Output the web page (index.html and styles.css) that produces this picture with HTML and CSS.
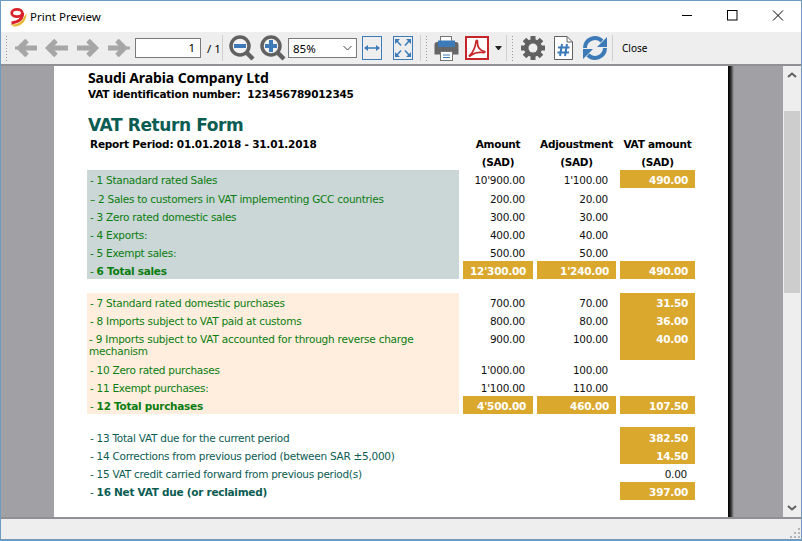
FILE: index.html
```html
<!DOCTYPE html>
<html lang="en">
<head>
	<meta charset="UTF-8">
	<title>Print Preview</title>
	<link rel="stylesheet" href="styles.css">
</head>
<body>

<div class="window">

	<div class="titlebar">
		<svg class="logo" width="18" height="20" viewBox="0 0 18 20">
			<path d="M1.500 17C8 18.500 13 15 15.500 9L17.500 6.500C18 13 12 20.500 4.500 19.500Z" fill="#e8b93a"/>
			<ellipse cx="8" cy="6" rx="5.300" ry="3.600" fill="none" stroke="#d9232a" stroke-width="2.800"/>
			<path d="M13.800 6C13.800 11 10 15 2.500 16" fill="none" stroke="#d9232a" stroke-width="2.800"/>
		</svg>
		<span class="title">Print Preview</span>
		<div class="caption-btns">
			<svg width="12" height="12" viewBox="0 0 12 12"><path d="M0 5.500H10" stroke="#000"/></svg>
			<svg width="12" height="12" viewBox="0 0 12 12"><rect x="0.500" y="0.500" width="9.500" height="9.500" fill="none" stroke="#000"/></svg>
			<svg width="12" height="12" viewBox="0 0 12 12"><path d="M1 0.500L11 10.500M11 0.500L1 10.500" stroke="#000"/></svg>
		</div>
	</div>

	<div class="toolbar">
		<span class="grip"></span>
		<svg class="ico first" width="24" height="20" viewBox="0 0 24 20"><path d="M1 10H4" stroke="#a6a6a6" stroke-width="3"/><path d="M13 2.500L5.500 10L13 17.500M6 10H23" fill="none" stroke="#a6a6a6" stroke-width="5"/></svg>
		<svg class="ico prev" width="24" height="20" viewBox="0 0 24 20"><path d="M12 2.500L4.500 10L12 17.500M5 10H24" fill="none" stroke="#a6a6a6" stroke-width="5"/></svg>
		<svg class="ico next" width="24" height="20" viewBox="0 0 24 20"><path d="M12 2.500L19.500 10L12 17.500M1 10H19" fill="none" stroke="#a6a6a6" stroke-width="5"/></svg>
		<svg class="ico last" width="24" height="20" viewBox="0 0 24 20"><path d="M10 2.500L17.500 10L10 17.500M1 10H17" fill="none" stroke="#a6a6a6" stroke-width="5"/><path d="M19 10H23" stroke="#a6a6a6" stroke-width="3"/></svg>
		<div class="page-input">1</div>
		<span class="page-count">/ 1</span>
		<span class="sep"></span>
		<svg class="ico zoom-out" width="26" height="26" viewBox="0 0 26 26">
			<path d="M17 17L24 24" stroke="#616161" stroke-width="4.500"/>
			<circle cx="11" cy="11" r="9" fill="#f2f2f2" stroke="#616161" stroke-width="3.500"/>
			<path d="M5 11H17" stroke="#3d7ab8" stroke-width="4"/>
		</svg>
		<svg class="ico zoom-in" width="26" height="26" viewBox="0 0 26 26">
			<path d="M17 17L24 24" stroke="#616161" stroke-width="4.500"/>
			<circle cx="11" cy="11" r="9" fill="#f2f2f2" stroke="#616161" stroke-width="3.500"/>
			<path d="M5 11H17M11 5V17" stroke="#3d7ab8" stroke-width="4"/>
		</svg>
		<div class="zoom-select">
			<span>85%</span>
			<svg width="9" height="6" viewBox="0 0 9 6"><path d="M0.500 1L4.500 5L8.500 1" fill="none" stroke="#444"/></svg>
		</div>
		<div class="fit-box fit-width">
			<svg width="16" height="8" viewBox="0 0 16 8"><path d="M2 4H14" stroke="#3d7ab8" stroke-width="1.500"/><path d="M0 4L4 1V7ZM16 4L12 1V7Z" fill="#3d7ab8"/></svg>
		</div>
		<div class="fit-box fit-page">
			<svg width="18" height="20" viewBox="0 0 18 20"><path d="M1 1H6L1 6ZM17 1H12L17 6ZM1 19H6L1 14ZM17 19H12L17 14Z" fill="#3d7ab8"/><path d="M3 3L7 7.500M15 3L11 7.500M3 17L7 12.500M15 17L11 12.500" stroke="#3d7ab8" stroke-width="1.500"/></svg>
		</div>
		<span class="sep group-sep"></span>
		<span class="grip"></span>
		<svg class="ico printer" width="25" height="25" viewBox="0 0 25 25">
			<rect x="6.500" y="0.500" width="11" height="6" fill="#fff" stroke="#757575"/>
			<path d="M3 6H22Q24.500 6 24.500 9V18.500H0.500V9Q0.500 6 3 6Z" fill="#666"/>
			<rect x="4" y="4.500" width="17" height="6.500" fill="#3d7ab8"/>
			<rect x="6.500" y="15.500" width="12" height="9" fill="#fff" stroke="#757575"/>
			<path d="M9 19H16M9 21.500H16" stroke="#3d7ab8"/>
		</svg>
		<svg class="ico pdf" width="24" height="24" viewBox="0 0 24 24">
			<rect x="1" y="1" width="22" height="22" fill="#fff" stroke="#c4262a" stroke-width="2"/>
			<path d="M4.500 19.500C7.500 17.500 10.500 11 11 5.500C11.200 3.500 12.800 4 12.500 6.500C12 10.500 15 15 19.500 15.500C20.500 16 19.500 17 17.500 16.500C13.500 16 9 17 6.500 19C5 20.500 4 20.500 4.500 19.500Z" fill="none" stroke="#c4262a" stroke-width="1.700"/>
		</svg>
		<span class="caret"></span>
		<span class="sep group-sep2"></span>
		<span class="grip"></span>
		<svg class="ico gear" width="26" height="26" viewBox="0 0 26 26">
			<circle cx="13" cy="13" r="9" fill="#616161"/>
			<path d="M13 1V25M1 13H25M4.500 4.500L21.500 21.500M21.500 4.500L4.500 21.500" stroke="#616161" stroke-width="5"/>
			<circle cx="13" cy="13" r="4.500" fill="#eeeeee"/>
		</svg>
		<svg class="ico doc" width="19" height="24" viewBox="0 0 19 24">
			<path d="M0.500 0.500H13L18.500 6V23.500H0.500Z" fill="#fff" stroke="#616161"/>
			<path d="M13 0.500V6H18.500" fill="none" stroke="#616161"/>
			<path d="M8 8L6 20M13 8L11 20M4 11.500H15.500M3.500 16.500H15" stroke="#3d7ab8" stroke-width="2"/>
		</svg>
		<svg class="ico refresh" width="26" height="26" viewBox="0 0 26 26">
			<path d="M3 13A10 10 0 0 1 20 6" fill="none" stroke="#3d7ab8" stroke-width="4"/>
			<path d="M23 13A10 10 0 0 1 6 20" fill="none" stroke="#3d7ab8" stroke-width="4"/>
			<path d="M25 2V12H15ZM1 24V14H11Z" fill="#3d7ab8"/>
		</svg>
		<span class="sep close-sep"></span>
		<span class="close-label">Close</span>
	</div>

	<div class="preview">
		<div class="canvas">
			<div class="page">
				<div class="company">Saudi Arabia Company Ltd</div>
				<div class="vat-id">VAT identification number:&nbsp; 123456789012345</div>
				<h1 class="form-title">VAT Return Form</h1>

				<div class="head-row">
					<div class="period">Report Period: 01.01.2018 - 31.01.2018</div>
					<div class="col-head">Amount<br>(SAD)</div>
					<div class="col-head">Adjoustment<br>(SAD)</div>
					<div class="col-head">VAT amount<br>(SAD)</div>
				</div>

				<div class="vat-grid sales">
					<div class="lbl">- 1 Stanadard rated Sales</div><div class="num">10'900.00</div><div class="num">1'100.00</div><div class="num hi top-hi">490.00</div>
					<div class="lbl">– 2 Sales to customers in VAT implementing GCC countries</div><div class="num">200.00</div><div class="num">20.00</div><div></div>
					<div class="lbl">- 3 Zero rated domestic sales</div><div class="num">300.00</div><div class="num">30.00</div><div></div>
					<div class="lbl">- 4 Exports:</div><div class="num">400.00</div><div class="num">40.00</div><div></div>
					<div class="lbl">- 5 Exempt sales:</div><div class="num">500.00</div><div class="num">50.00</div><div></div>
					<div class="lbl">- <b>6 Total sales</b></div><div class="num hi">12'300.00</div><div class="num hi">1'240.00</div><div class="num hi">490.00</div>
				</div>

				<div class="vat-grid purchases">
					<div class="lbl">- 7 Standard rated domestic purchases</div><div class="num">700.00</div><div class="num">70.00</div><div class="num hi">31.50</div>
					<div class="lbl">- 8 Imports subject to VAT paid at customs</div><div class="num">800.00</div><div class="num">80.00</div><div class="num hi">36.00</div>
					<div class="lbl lbl-wrap">- 9 Imports subject to VAT accounted for through reverse charge<br>mechanism</div><div class="num">900.00</div><div class="num">100.00</div><div class="num hi">40.00</div>
					<div class="lbl">- 10 Zero rated purchases</div><div class="num">1'000.00</div><div class="num">100.00</div><div></div>
					<div class="lbl">- 11 Exempt purchases:</div><div class="num">1'100.00</div><div class="num">110.00</div><div></div>
					<div class="lbl">- <b>12 Total purchases</b></div><div class="num hi">4'500.00</div><div class="num hi">460.00</div><div class="num hi">107.50</div>
				</div>

				<div class="vat-grid net">
					<div class="lbl net-first">- 13 Total VAT due for the current period</div><div></div><div></div><div class="num hi net-first">382.50</div>
					<div class="lbl">- 14 Corrections from previous period (between SAR ±5,000)</div><div></div><div></div><div class="num hi">14.50</div>
					<div class="lbl">- 15 VAT credit carried forward from previous period(s)</div><div></div><div></div><div class="num">0.00</div>
					<div class="lbl">- <b>16 Net VAT due (or reclaimed)</b></div><div></div><div></div><div class="num hi">397.00</div>
				</div>
			</div>
			<div class="page-shadow"></div>
		</div>
		<div class="scrollbar">
			<svg width="10" height="6" viewBox="0 0 10 6"><path d="M1 5L5 1.500L9 5" fill="none" stroke="#606060" stroke-width="2"/></svg>
			<div class="track"><div class="thumb"></div></div>
			<svg width="10" height="6" viewBox="0 0 10 6"><path d="M1 1L5 4.500L9 1" fill="none" stroke="#606060" stroke-width="2"/></svg>
		</div>
	</div>

	<div class="statusbar">
		<svg width="12" height="12" viewBox="0 0 12 12"><path d="M9 1h2v2H9zM5 5h2v2H5zM9 5h2v2H9zM1 9h2v2H1zM5 9h2v2H5zM9 9h2v2H9z" fill="#b5b5b5"/></svg>
	</div>
</div>

</body>
</html>
```

FILE: styles.css
```css
* {
	box-sizing: border-box;
}

html, body {
	margin: 0;
	height: 100%;
	overflow: hidden;
}

body {
	font-family: "DejaVu Sans", sans-serif;
	font-size: 10.5px;
	color: #000;
}

.window {
	width: 802px;
	height: 541px;
	display: flex;
	flex-direction: column;
	border: 1px solid #6f9bc0;
	border-bottom-width: 2px;
	background: #fff;
}

.titlebar {
	height: 31px;
	flex: none;
	display: flex;
	align-items: center;
	padding-left: 8px;
	background: #fff;
}

.title {
	margin-left: 3px;
	font-family: "Noto Sans", sans-serif;
	font-size: 11.5px;
}

.caption-btns {
	margin-left: auto;
	display: flex;
	gap: 33px;
	padding-right: 17px;
	padding-bottom: 1px;
}

.toolbar {
	height: 34px;
	flex: none;
	display: flex;
	align-items: center;
	padding-left: 4px;
	background: #eeeeee;
	border-bottom: 2px solid #8f9194;
}

.grip {
	width: 3px;
	height: 26px;
	flex: none;
	background-image: radial-gradient(#9a9a9a 1px, transparent 1px);
	background-size: 3px 3px;
}

.ico {
	flex: none;
}

.first { margin-left: 6px; }
.prev { margin-left: 6px; }
.next { margin-left: 8px; }
.last { margin-left: 7px; }

.page-input {
	width: 66px;
	height: 20px;
	margin-left: 4px;
	padding-right: 5px;
	border: 1px solid #7a7a7a;
	background: #fff;
	text-align: right;
	font-family: "Noto Sans", sans-serif;
	font-size: 11.5px;
	line-height: 18px;
}

.page-count {
	width: 14px;
	margin-left: 6px;
	font-family: "Noto Sans", sans-serif;
	font-size: 11.5px;
	white-space: nowrap;
}

.sep {
	width: 1px;
	height: 26px;
	flex: none;
	margin-left: 1px;
	background: #cfcfcf;
}

.zoom-out { margin-left: 6px; }
.zoom-in { margin-left: 5px; }

.zoom-select {
	width: 69px;
	height: 20px;
	margin-left: 2px;
	padding: 0 4px;
	display: flex;
	align-items: center;
	justify-content: space-between;
	border: 1px solid #7a7a7a;
	background: #fff;
	font-family: "Noto Sans", sans-serif;
	font-size: 11.5px;
}

.fit-box {
	width: 20px;
	height: 24px;
	flex: none;
	display: flex;
	align-items: center;
	justify-content: center;
	border: 1px solid #3d7ab8;
}

.fit-width { margin-left: 5px; }
.fit-page { margin-left: 11px; }

.group-sep { margin-left: 7px; margin-right: 4px; }
.group-sep2 { margin-left: 4px; margin-right: 4px; }

.printer { margin-left: 6px; }
.pdf { margin-left: 6px; }

.caret {
	width: 7px;
	flex: none;
	margin-left: 6px;
	border-left: 3.500px solid transparent;
	border-right: 3.500px solid transparent;
	border-top: 4px solid #222;
}

.gear { margin-left: 6px; }
.doc { margin-left: 8px; }
.refresh { margin-left: 9px; }
.close-sep { margin-left: 4px; }

.close-label {
	margin-left: 9px;
	font-family: "Noto Sans", sans-serif;
	font-size: 10px;
}

.preview {
	flex: 1;
	min-height: 0;
	display: flex;
}

.canvas {
	flex: 1;
	display: flex;
	padding-left: 53px;
	overflow: hidden;
	background: #a0a0a5;
}

.page {
	width: 674px;
	flex: none;
	padding: 3px 33px 0 33px;
	background: #fff;
}

.page-shadow {
	width: 6px;
	flex: none;
	background: linear-gradient(to right, #000, #222 40%, #a0a0a5);
}

.company {
	padding-left: 1px;
	font-family: "Noto Sans", sans-serif;
	font-size: 14px;
	font-weight: bold;
	line-height: 18px;
	letter-spacing: -0.1px;
}

.vat-id {
	padding-left: 1px;
	font-weight: bold;
	line-height: 14px;
	letter-spacing: -0.22px;
}

.form-title {
	margin: 13px 0 0;
	padding-left: 1px;
	font-size: 17px;
	font-weight: bold;
	line-height: 22px;
	letter-spacing: -0.4px;
	color: #0b5c52;
}

.head-row {
	display: grid;
	grid-template-columns: 372px 70px 79px 75px;
	column-gap: 4px;
	height: 35px;
	margin-top: -1px;
	font-weight: bold;
	line-height: 18px;
	letter-spacing: -0.27px;
}

.period {
	padding-left: 3px;
	letter-spacing: -0.21px;
}

.col-head {
	text-align: center;
}

.vat-grid {
	display: grid;
	grid-template-columns: 372px 70px 79px 75px;
	column-gap: 4px;
	line-height: 20px;
	letter-spacing: -0.27px;
}

.sales {
	grid-template-rows: 19px repeat(5, 18px);
}

.purchases {
	grid-template-rows: 18px 18px 31px 18px 18px 18px;
	margin-top: 14px;
}

.net {
	grid-template-rows: 19px 18px 18px 18px;
	margin-top: 13px;
}

.lbl {
	padding-left: 3px;
	color: #0a7d10;
}

.lbl-wrap {
	padding-top: 4px;
	padding-left: 2px;
	line-height: 12px;
	letter-spacing: -0.22px;
}

.sales .lbl {
	background: #cbd6d6;
}

.purchases .lbl {
	background: #ffeedd;
}

.net .lbl {
	color: #0b5c52;
}

.net-first {
	padding-top: 1px;
}

.num {
	padding-right: 8px;
	text-align: right;
	color: #111;
}

.hi {
	padding-right: 7px;
	background: #dba82e;
	color: #fff;
	font-weight: bold;
}

.top-hi {
	height: 18px;
}

.scrollbar {
	width: 18px;
	flex: none;
	display: flex;
	flex-direction: column;
	align-items: center;
	padding: 6px 0;
	background: #eeeeee;
}

.track {
	flex: 1;
	width: 100%;
	padding: 33px 1px 0;
}

.thumb {
	height: 182px;
	background: #cdcdcd;
}

.statusbar {
	height: 22px;
	flex: none;
	display: flex;
	justify-content: flex-end;
	align-items: flex-end;
	background: #eeeeee;
	border-top: 2px solid #8f9194;
}
```
